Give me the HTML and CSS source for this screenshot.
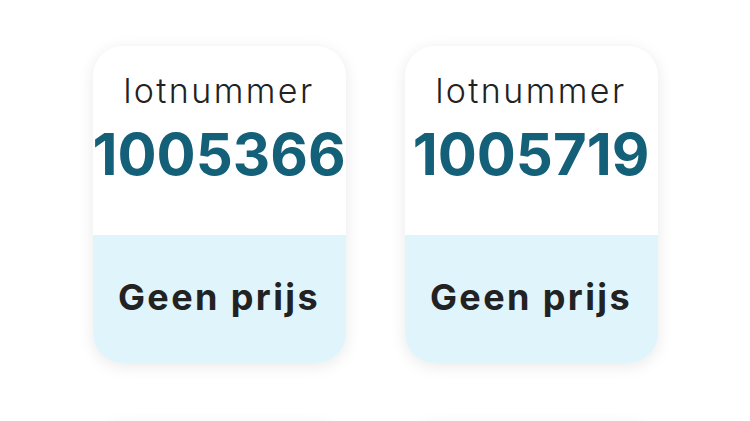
FILE: index.html
```html
<!DOCTYPE html>
<html>
	<head>
		<meta charset="utf-8" />
		<title>Loten</title>
		<link rel="stylesheet" href="styles.css">
	</head>
	<body>
		<div class="tickets">
			<div class="ticket">
				<div class="top">
					<p class="label">lotnummer</p>
					<p class="number">1005366</p>
				</div>
				<div class="result">Geen prijs</div>
			</div>
			<div class="ticket">
				<div class="top">
					<p class="label">lotnummer</p>
					<p class="number">1005719</p>
				</div>
				<div class="result">Geen prijs</div>
			</div>
			<!-- volgende rij, valt onder de vouw -->
			<div class="ticket"></div>
			<div class="ticket"></div>
		</div>
	</body>
</html>
```

FILE: styles.css
```css
body,div,p{
	margin: 0;
	padding: 0;
}

body{
	background: #ffffff;
	font-family: Inter, "Noto Sans", sans-serif;
	overflow: hidden;
}

.tickets{
	display: grid;
	grid-template-columns: 253px 253px;
	justify-content: center;
	column-gap: 59px;
	row-gap: 60px;
	padding-top: 46px;
}

.ticket{
	height: 317px;
	border-radius: 30px;
	overflow: hidden;
	background: #ffffff;
	box-shadow: 0 3px 16px rgba(0,0,0,0.09);
	display: flex;
	flex-direction: column;
}

.ticket .top{
	height: 189px;
	text-align: center;
}

.ticket .label{
	padding-top: 25px;
	font-size: 34px;
	font-weight: 300;
	letter-spacing: 2.4px;
	line-height: 40px;
	color: #222222;
}

.ticket .number{
	margin-top: 13px;
	font-size: 58px;
	font-weight: 700;
	line-height: 60px;
	color: #136078;
}

.ticket .result{
	flex: 1;
	background: #dff4fb;
	display: flex;
	align-items: center;
	justify-content: center;
	padding-bottom: 4px;
	font-size: 36px;
	font-weight: 700;
	letter-spacing: 2.4px;
	color: #222222;
}
```
